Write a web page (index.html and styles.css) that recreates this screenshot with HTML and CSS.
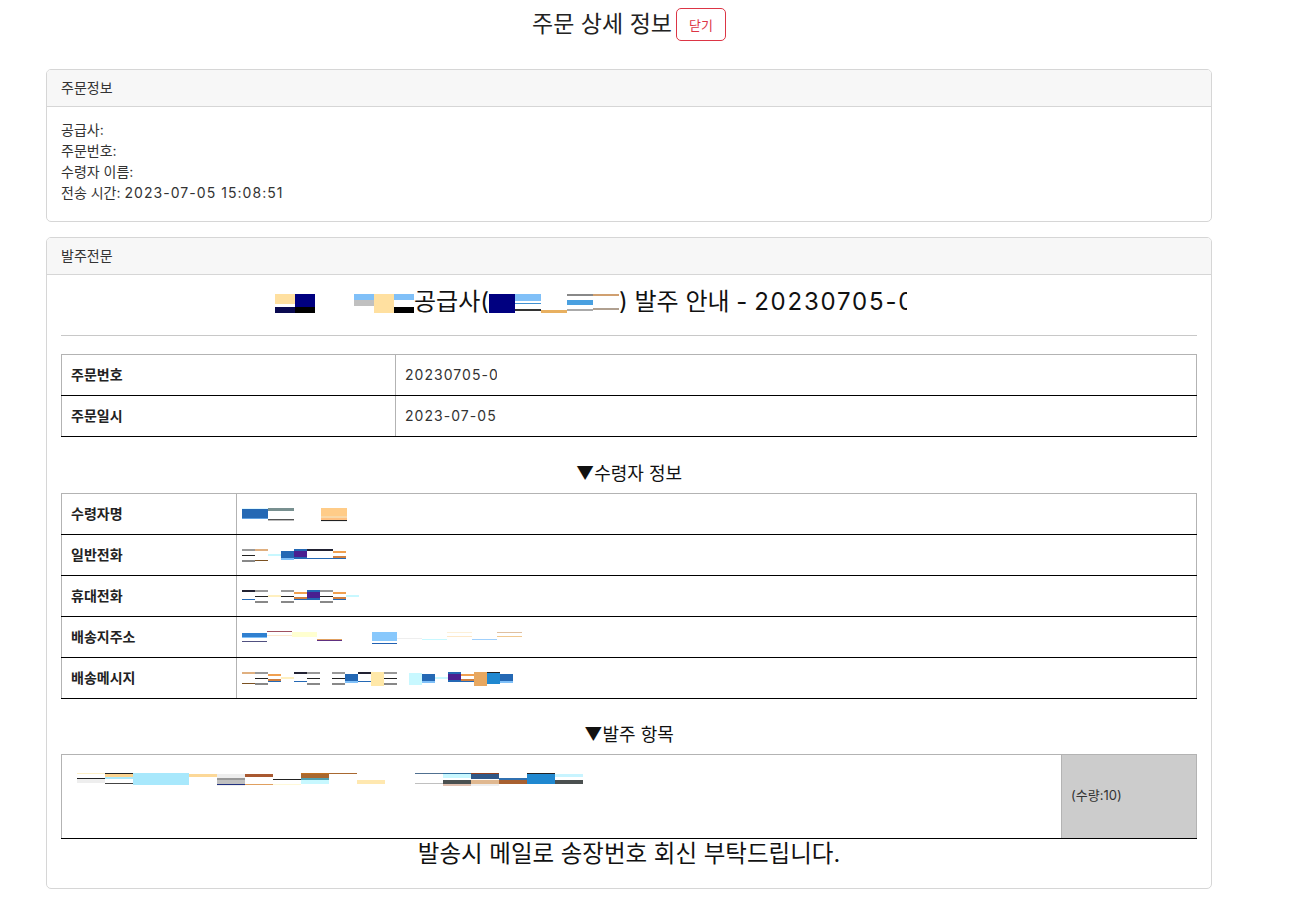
FILE: index.html
```html
<!DOCTYPE html>
<html lang="ko">
<head>
<meta charset="utf-8">
<title>주문 상세 정보</title>
<link rel="stylesheet" href="styles.css">
</head>
<body>
<div class="wrap">
  <div class="page-head">
    <h1 class="page-title">주문 상세 정보</h1>
    <button class="btn-close" type="button">닫기</button>
  </div>

  <section class="card">
    <div class="card-header">주문정보</div>
    <div class="card-body info">
      <div>공급사:</div>
      <div>주문번호:</div>
      <div>수령자 이름:</div>
      <div>전송 시간: <span class="num">2023-07-05 15:08:51</span></div>
    </div>
  </section>

  <section class="card">
    <div class="card-header">발주전문</div>
    <div class="card-body doc">
      <h2 class="doc-title"><span class="rd"><i class="t1"></i><i class="t2"></i><i class="gap39"></i><i class="t3"></i><i class="t4"></i><i class="t5"></i></span>공급사(<span class="rd"><i class="t6"></i><i class="t7"></i><i class="t8"></i><i class="t9"></i><i class="t10"></i></span>) 발주 안내 - <span class="num">20230705-<span class="cut">0</span></span><span class="ghost">00000</span></h2>
      <hr class="rule">

      <table class="grid g1">
        <tr><th>주문번호</th><td><span class="num">20230705-<span class="cut-sm">0</span></span></td></tr>
        <tr><th>주문일시</th><td><span class="num">2023-07-05</span></td></tr>
      </table>

      <h3 class="sec-title">▼수령자 정보</h3>
      <table class="grid g2">
        <tr><th>수령자명</th><td><span class="rd sm"><i class="n1"></i><i class="n2"></i><i class="gap27"></i><i class="n3"></i></span></td></tr>
        <tr><th>일반전화</th><td><span class="rd sm"><i class="p8"></i><i class="p2"></i><i class="p6"></i><i class="p3"></i><i class="p4"></i><i class="p1"></i><i class="p1"></i><i class="p5"></i></span></td></tr>
        <tr><th>휴대전화</th><td><span class="rd sm"><i class="p1"></i><i class="p8"></i><i class="p7"></i><i class="p8"></i><i class="p5"></i><i class="p4"></i><i class="p8"></i><i class="p5"></i><i class="p6"></i></span></td></tr>
        <tr><th>배송지주소</th><td><span class="rd sm"><i class="a1"></i><i class="a2"></i><i class="a3"></i><i class="a4"></i><i class="gap30"></i><i class="a5"></i><i class="a6"></i><i class="a7"></i><i class="a8"></i><i class="a9"></i><i class="a10"></i></span></td></tr>
        <tr><th>배송메시지</th><td><span class="rd sm"><i class="p2"></i><i class="p8"></i><i class="p5"></i><i class="p7"></i><i class="p1"></i><i class="p8"></i><i class="gap12"></i><i class="p8"></i><i class="p3"></i><i class="p1"></i><i class="m1"></i><i class="p8"></i><i class="gap12"></i><i class="m2"></i><i class="p3"></i><i class="p6"></i><i class="p4"></i><i class="p5"></i><i class="m3"></i><i class="m4"></i><i class="p3"></i></span></td></tr>
      </table>

      <h3 class="sec-title">▼발주 항목</h3>
      <table class="grid g3">
        <tr>
          <td class="item"><span class="rd md"><i class="o1"></i><i class="o2"></i><i class="o3"></i><i class="o3"></i><i class="o4"></i><i class="o5"></i><i class="o6"></i><i class="o7"></i><i class="o8"></i><i class="o9"></i><i class="o10"></i><i class="gap30"></i><i class="o11"></i><i class="o12"></i><i class="o13"></i><i class="o14"></i><i class="o15"></i><i class="o16"></i></span></td>
          <td class="qty">(수량:10)</td>
        </tr>
      </table>

      <p class="closing">발송시 메일로 송장번호 회신 부탁드립니다.</p>
    </div>
  </section>
</div>
</body>
</html>
```

FILE: styles.css
```css
* { box-sizing: border-box; }
html, body { margin: 0; padding: 0; background: #fff; }
body {
  font-family: Inter, "Noto Sans CJK KR", sans-serif;
  color: #212529;
  font-size: 14px;
}
.wrap {
  width: 1166px;
  margin-left: 46px;
  padding-top: 8px;
  padding-bottom: 10px;
}
.num { letter-spacing: 0.075em; }
.page-head {
  display: flex;
  justify-content: center;
  align-items: center;
  gap: 4px;
  margin-bottom: 28px;
}
.page-title {
  margin: 0;
  font-size: 23px;
  font-weight: 400;
  line-height: 33px;
  color: #222;
}
.btn-close {
  height: 33px;
  padding: 0 12px;
  font-family: inherit;
  font-size: 13px;
  color: #dc3545;
  background: #fff;
  border: 1px solid #dc3545;
  border-radius: 5px;
}
.card {
  border: 1px solid #d6d6d6;
  border-radius: 5px;
  margin-bottom: 15px;
  overflow: hidden;
}
.card-header {
  height: 37px;
  line-height: 36px;
  padding: 0 14px;
  background: #f7f7f7;
  border-bottom: 1px solid #d6d6d6;
  font-size: 14px;
  color: #333;
}
.card-body { padding: 0 14px; }
.info {
  padding-top: 12px;
  padding-bottom: 18px;
  line-height: 21px;
  color: #333;
}
.doc { padding-top: 12px; padding-bottom: 19px; }
.doc-title {
  margin: 0;
  text-align: center;
  font-size: 24px;
  font-weight: 400;
  line-height: 30px;
  color: #111;
}
.cut {
  display: inline-block;
  width: 9px;
  overflow: hidden;
  vertical-align: bottom;
}
.cut-sm {
  display: inline-block;
  width: 8px;
  overflow: hidden;
  vertical-align: bottom;
}
.ghost { visibility: hidden; }
.rule {
  margin: 18px 0 18px;
  border: 0;
  border-top: 1px solid #c8c8c8;
}
.grid {
  width: 100%;
  border-collapse: collapse;
  border: 1px solid #b3b3b3;
  font-size: 14px;
}
.grid th, .grid td {
  border-top: none;
  border-left: none;
  border-right: 1px solid #b3b3b3;
  border-bottom: 1px solid #000;
  padding: 10px 9px;
  line-height: 20px;
  text-align: left;
  vertical-align: middle;
  color: #333;
}
.grid th { font-weight: 700; color: #222; }
.g1 th { width: 334px; }
.g2 th { width: 175px; }
.g2 td { padding-left: 5px; }
.sec-title {
  margin: 26px 0 8px;
  text-align: center;
  font-size: 18px;
  font-weight: 400;
  line-height: 22px;
  color: #111;
}
.g2 + .sec-title { margin-top: 25px; }
.g3 td { height: 84px; }
.g3 .item { vertical-align: top; padding: 14px 15px; }
.g3 .qty {
  width: 135px;
  background: #cccccc;
  font-size: 13px;
  padding-top: 6px;
}
.closing {
  margin: 0;
  text-align: center;
  font-size: 23.5px;
  line-height: 30px;
  color: #111;
}

/* redaction blocks */
.rd { display: inline-flex; vertical-align: -3px; }
.rd i { display: block; height: 19px; width: 20px; }
.rd.sm { vertical-align: middle; }
.rd.sm i { height: 14px; width: 13px; }
.rd.md i { height: 14px; width: 28px; }
.gap39 { width: 39px !important; }
.gap27 { width: 27px !important; }
.gap30 { width: 30px !important; }
.gap12 { width: 12px !important; }

.t1 { background: linear-gradient(#ffe0a0 0 10px, #fff 10px 13px, #0a0a50 13px 19px); }
.t2 { background: linear-gradient(#000080 0 13px, #000 13px 19px); }
.t3 { background: linear-gradient(#80c0f8 0 6px, #c0c0c0 6px 12px, #fff 12px); }
.t4 { background: #ffe0a0; }
.t5 { background: linear-gradient(#80c0f8 0 6px, #fff 6px 13px, #000 13px 19px); }
.rd .t6, .rd .t7, .rd .t8, .rd .t9, .rd .t10 { width: 26px; }
.t6 { background: #000080; }
.t7 { background: linear-gradient(#80c0f8 0 7px, #fff 7px 9px, #4090d0 9px 10px, #fff 10px 15px, #333 15px 17px, #fff 17px); }
.t8 { background: linear-gradient(#fff 0 16px, #e8b060 16px 19px); }
.t9 { background: linear-gradient(#888 0 2px, #fff 2px 6px, #4aa0e0 6px 11px, #fff 11px 15px, #aaa 15px 17px, #fff 17px); }
.t10 { background: linear-gradient(#d0a070 0 2px, #fff 2px 14px, #b0a090 14px 16px, #fff 16px); }

.rd.sm .n1, .rd.sm .n2, .rd.sm .n3 { width: 26px; }
.n1 { background: linear-gradient(#e0f8ff 0 1px, #2468b4 1px 10px, #60a0e0 10px 11px, #fff 11px); }
.n2 { background: linear-gradient(#789090 0 3px, #fff 3px 11px, #555 11px 12px, #bbb 12px 13px, #fff 13px); }
.n3 { background: linear-gradient(#ffcc88 0 8px, #f8d8a8 8px 10px, #ffc080 10px 12px, #222 12px 13px, #eee 13px 14px); }

.p1 { background: linear-gradient(#223 0 2px, #fff 2px 9px, #2468b4 9px 10px, #fff 10px); }
.p2 { background: linear-gradient(#e0b080 0 2px, #fff 2px 11px, #7a5020 11px 12px, #fff 12px); }
.p3 { background: linear-gradient(#fff 0 2px, #2468b4 2px 9px, #80c0f8 9px 11px, #fff 11px); }
.p4 { background: linear-gradient(#2468b4 0 2px, #4a2090 2px 8px, #2468b4 8px 10px, #fff 10px); }
.p5 { background: linear-gradient(#fff 0 2px, #f0a050 2px 4px, #fff 4px 7px, #d08040 7px 9px, #2468b4 9px 10px, #fff 10px); }
.p6 { background: linear-gradient(#fff 0 5px, #c8f8ff 5px 7px, #fff 7px); }
.p7 { background: linear-gradient(#fff 0 5px, #fff0c0 5px 7px, #fff 7px); }
.p8 { background: linear-gradient(#999 0 2px, #fff 2px 6px, #222 6px 7px, #fff 7px 11px, #888 11px 13px, #fff 13px); }

.rd.sm .a1, .rd.sm .a2, .rd.sm .a3, .rd.sm .a4, .rd.sm .a5, .rd.sm .a6, .rd.sm .a7, .rd.sm .a8, .rd.sm .a9, .rd.sm .a10 { width: 25px; }
.a1 { background: linear-gradient(#fff 0 2px, #3080d0 2px 6px, #80c0f8 6px 7px, #fff 7px 10px, #505080 10px 11px, #fff 11px); }
.a2 { background: linear-gradient(#a05060 0 1px, #fff 1px 4px, #fde8d0 4px 5px, #fff 5px); }
.a3 { background: linear-gradient(#fff 0 1px, #ffffd0 1px 6px, #fff 6px); }
.a4 { background: linear-gradient(#fff 0 8px, #e0a060 8px 9px, #603080 9px 10px, #fff 10px); }
.a5 { background: linear-gradient(#fff 0 1px, #88c8fc 1px 10px, #fff 10px 12px, #2060b0 12px 13px, #fff 13px); }
.a6 { background: linear-gradient(#fff 0 7px, #eee 7px 8px, #fff 8px); }
.a7 { background: linear-gradient(#fff 0 8px, #c8f8ff 8px 9px, #fff 9px); }
.a8 { background: linear-gradient(#fff 0 1px, #fdf0d8 1px 2px, #fff 2px 5px, #fde8c8 5px 6px, #fff 6px); }
.a9 { background: linear-gradient(#fff 0 8px, #a0d0fc 8px 9px, #fff 9px); }
.a10 { background: linear-gradient(#fff 0 1px, #e0c0a0 1px 2px, #fff 2px 5px, #f0c890 5px 6px, #fff 6px); }
.m1 { background: #ffe8a8; }
.m2 { background: linear-gradient(#fff 0 1px, #c8f8ff 1px 13px, #fff 13px); }
.m3 { background: #e8a860; }
.m4 { background: linear-gradient(#222 0 1px, #2088d0 1px 12px, #fff 12px); }

.o1 { background: linear-gradient(#fdf0c8 0 1px, #fff 1px 5px, #222 5px 6px, #eee 6px 10px, #fff 10px); }
.o2 { background: linear-gradient(#222 0 1px, #fcd490 1px 4px, #a8e8fc 4px 6px, #fff 6px 10px, #444 10px 11px, #fff 11px); }
.o3 { background: linear-gradient(#a8e8fc 0 12px, #fff 12px); }
.o4 { background: linear-gradient(#fff 0 1px, #fcd898 1px 4px, #fff 4px); }
.o5 { background: linear-gradient(#fff 0 1px, #eee 1px 5px, #999 5px 7px, #c0c0c0 7px 11px, #203080 11px 12px, #eee 12px 13px, #fff 13px); }
.o6 { background: linear-gradient(#fff 0 1px, #a85830 1px 4px, #fff 4px 11px, #e0a060 11px 12px, #fff 12px); }
.o7 { background: linear-gradient(#fff 0 6px, #222 6px 7px, #fff 7px 11px, #fff8d8 11px 12px, #fff 12px); }
.o8 { background: linear-gradient(#c07020 0 1px, #a86830 1px 5px, #50a0b0 5px 7px, #c8f8ff 7px 11px, #fff 11px); }
.o9 { background: linear-gradient(#a86830 0 1px, #fff 1px); }
.o10 { background: linear-gradient(#fff 0 7px, #ffe8b0 7px 11px, #fff 11px); }
.o11 { background: linear-gradient(#507090 0 1px, #fff 1px 10px, #c0c0c0 10px 11px, #fff 11px); }
.o12 { background: linear-gradient(#3070a0 0 1px, #c8f8ff 1px 5px, #fff 5px 7px, #4a5050 7px 11px, #e0c0b0 11px 13px, #fff 13px); }
.o13 { background: linear-gradient(#904020 0 1px, #305888 1px 6px, #fff 6px 7px, #e0b890 7px 11px, #eee 11px 13px, #fff 13px); }
.o14 { background: linear-gradient(#fff 0 5px, #3070b0 5px 7px, #a86030 7px 11px, #fff 11px); }
.o15 { background: linear-gradient(#222 0 1px, #2088d0 1px 11px, #fff 11px); }
.o16 { background: linear-gradient(#fff 0 1px, #c8f4ff 1px 4px, #fff 4px 7px, #4a5050 7px 11px, #fff 11px); }
```
